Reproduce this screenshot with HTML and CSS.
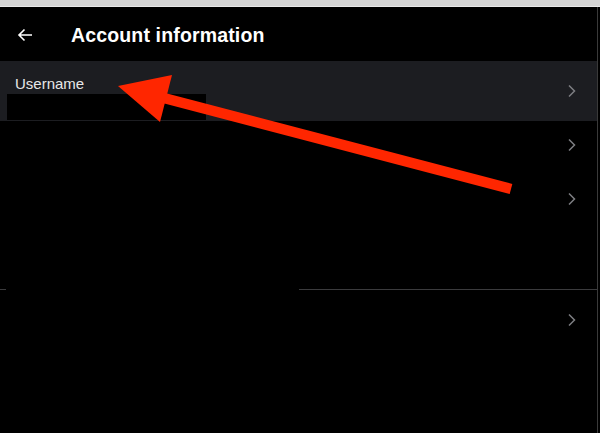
FILE: index.html
```
<!DOCTYPE html>
<html lang="en">

<head>
    <meta name="viewport" content="width=device-width, initial-scale=1.0">
    <title>Account information</title>
    <link rel="stylesheet" href="styles.css">
</head>

<body>
    <div class="top-strip"></div>
    <div id="main">
        <div class="header">
            <svg class="back" width="16" height="16" viewBox="0 0 16 16">
                <path d="M15 8H2M7.5 2.5L2 8l5.5 5.5" fill="none" stroke="#ffffff" stroke-width="1.6" />
            </svg>
            <h1 id="title">Account information</h1>
        </div>

        <div class="row row-active">
            <div class="row-body">
                <div class="row-label">Username</div>
                <div class="redacted redacted-name"></div>
            </div>
            <svg class="chevron" width="10" height="14" viewBox="0 0 10 14">
                <path d="M2 1.5L7.5 7L2 12.5" fill="none" stroke="#7d7e82" stroke-width="1.5" />
            </svg>
        </div>

        <div class="row row-short">
            <div class="row-body"></div>
            <svg class="chevron" width="10" height="14" viewBox="0 0 10 14">
                <path d="M2 1.5L7.5 7L2 12.5" fill="none" stroke="#7d7e82" stroke-width="1.5" />
            </svg>
        </div>

        <div class="row row-tall">
            <div class="row-body"></div>
            <svg class="chevron" width="10" height="14" viewBox="0 0 10 14">
                <path d="M2 1.5L7.5 7L2 12.5" fill="none" stroke="#7d7e82" stroke-width="1.5" />
            </svg>
        </div>

        <div class="divider">
            <span class="divider-line divider-start"></span>
            <span class="redacted divider-gap"></span>
            <span class="divider-line divider-rest"></span>
        </div>

        <div class="row row-last">
            <div class="row-body"></div>
            <svg class="chevron" width="10" height="14" viewBox="0 0 10 14">
                <path d="M2 1.5L7.5 7L2 12.5" fill="none" stroke="#7d7e82" stroke-width="1.5" />
            </svg>
        </div>
    </div>

    <!-- annotation arrow drawn over the screenshot -->
    <svg class="annotation" width="600" height="433" viewBox="0 0 600 433">
        <line x1="511" y1="189" x2="160" y2="97" stroke="#ff2600" stroke-width="10.5" />
        <polygon points="118,86 172,75 160,122" fill="#ff2600" />
    </svg>
</body>

</html>
```

FILE: styles.css
```
body {
    margin: 0;
    padding: 0;
    width: 600px;
    height: 433px;
    overflow: hidden;
    background: #000000;
    font-family: "Liberation Sans", Arial, Helvetica, sans-serif;
    position: relative;
}

.top-strip {
    height: 6px;
    background: #d5d5d5;
    border-bottom: 1px solid #e9e9e9;
}

#main {
    width: 597px;
    height: 426px;
    border-right: 1px solid #3a3a3a;
    display: flex;
    flex-direction: column;
}

.header {
    height: 54px;
    display: flex;
    align-items: center;
    padding-left: 17px;
    padding-top: 2px;
    box-sizing: border-box;
}

.back {
    display: block;
}

#title {
    margin: 0 0 0 38px;
    color: #ffffff;
    font-size: 19.5px;
    font-weight: bold;
    letter-spacing: 0.15px;
}

.row {
    display: flex;
    align-items: center;
    padding-right: 20px;
}

.row-body {
    flex: 1;
}

.row-active {
    height: 60px;
    background: #1c1d21;
}

.row-active .row-body {
    padding-top: 14px;
    align-self: stretch;
    display: flex;
    flex-direction: column;
}

.row-label {
    color: #e7e7e7;
    font-size: 15px;
    padding-left: 15px;
    line-height: 17px;
}

.redacted {
    background: #000000;
}

.redacted-name {
    margin: 2px 0 0 7px;
    width: 199px;
    height: 26px;
}

.row-short {
    height: 48px;
}

.row-tall {
    height: 120px;
    align-items: flex-start;
}

.row-tall .chevron {
    margin-top: 23px;
}

.divider {
    display: flex;
    height: 1px;
}

.divider-line {
    background: #3b3b3d;
}

.divider-start {
    width: 6px;
}

.divider-gap {
    width: 293px;
}

.divider-rest {
    flex: 1;
}

.row-last {
    height: 60px;
}

.chevron {
    display: block;
}

.annotation {
    position: absolute;
    top: 0;
    left: 0;
    pointer-events: none;
}
```
